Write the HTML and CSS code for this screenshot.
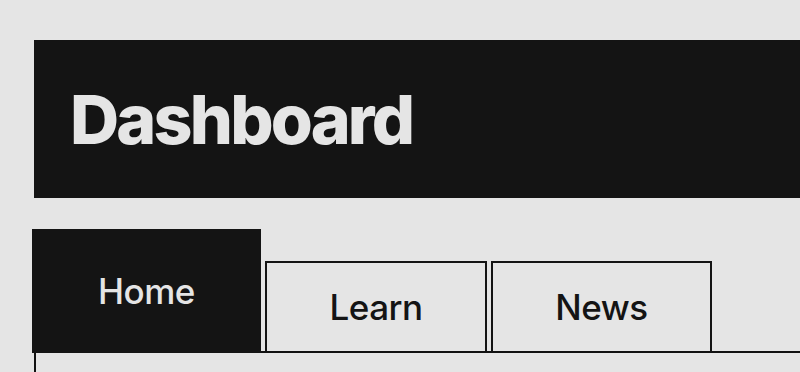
FILE: index.html
```html
<!DOCTYPE html>
<html lang="en">
<head>
<meta charset="utf-8">
<title>Dashboard</title>
<link rel="stylesheet" href="styles.css">
</head>
<body>
<header class="header">
  <h1 class="title">Dashboard</h1>
</header>
<nav class="tabs">
  <div class="tab tab-active">Home</div>
  <div class="tab">Learn</div>
  <div class="tab tab-news">News</div>
</nav>
<main class="panel"></main>
</body>
</html>
```

FILE: styles.css
```css
html, body {
  margin: 0;
  padding: 0;
  background: #e5e5e5;
  overflow: hidden;
}
body {
  font-family: Inter, "Liberation Sans", sans-serif;
  color: #141414;
  height: 372px;
}
.header {
  margin: 40px 0 0 34px;
  height: 158px;
  background: #141414;
  display: flex;
  align-items: center;
  padding-left: 36px;
}
.title {
  margin: 0;
  font-size: 68px;
  font-weight: 800;
  line-height: 1;
  color: #e5e5e5;
  letter-spacing: -2.8px;
}
.tabs {
  margin: 31px 0 0 32px;
  display: flex;
  align-items: flex-end;
  gap: 4px;
  position: relative;
  z-index: 1;
}
.tab {
  box-sizing: border-box;
  width: 222px;
  height: 90px;
  border: 2px solid #141414;
  border-bottom: none;
  display: flex;
  align-items: center;
  justify-content: center;
  font-size: 35px;
  font-weight: 500;
  letter-spacing: -0.5px;
}
.tab-active {
  width: 229px;
  height: 124px;
  margin-bottom: -2px;
  border: none;
  background: #141414;
  color: #e5e5e5;
}
.tab-news {
  width: 221px;
}
.panel {
  margin-left: 34px;
  height: 19px;
  border-top: 2px solid #111;
  border-left: 2px solid #111;
}
```
